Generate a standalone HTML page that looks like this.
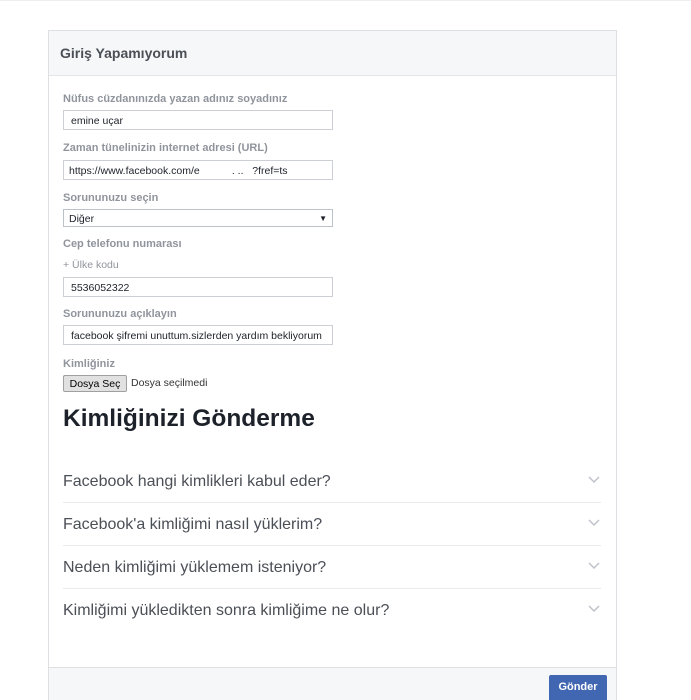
<!DOCTYPE html>
<html style="margin:0;height:700px;overflow:hidden"><head><meta charset="utf-8"><style>
body{margin:0;width:691px;height:700px;background:#fff;font-family:"Liberation Sans",Arial,sans-serif;position:relative;overflow:hidden}
.a{position:absolute}
.panel{left:48px;top:30px;width:567px;height:669px;border:1px solid #dddfe2;border-bottom:none;background:#fff}
.hdr{left:49px;top:31px;width:567px;height:44px;background:#f6f7f9;border-bottom:1px solid #e5e5e5}
.hdr span{position:absolute;left:11px;top:14px;font-size:14px;font-weight:bold;color:#4b4f56}
.lbl{left:63px;font-size:11px;font-weight:bold;color:#90949c}
.inp{left:63px;width:268px;height:18px;border:1px solid #ccd0d5;font-size:10.5px;color:#1d2129;line-height:20px;box-sizing:content-box}
.inp span{padding-left:7px}
.q{left:63px;font-size:16px;color:#4b4f56}
.sep{left:63px;width:538px;height:1px;background:#e9ebee}
</style></head><body>
<div class="a" style="left:0;top:0;width:691px;height:1px;background:#eee"></div>
<div class="a panel"></div>
<div class="a hdr"><span>Giriş Yapamıyorum</span></div>
<div class="a lbl" style="top:93px">Nüfus cüzdanınızda yazan adınız soyadınız</div>
<div class="a inp" style="top:110px"><span>emine uçar</span></div>
<div class="a lbl" style="top:142px">Zaman tünelinizin internet adresi (URL)</div>
<div class="a inp" style="top:160px"><span style="padding-left:5px">https://www.facebook.com/e&nbsp;&nbsp;&nbsp;&nbsp;&nbsp;&nbsp;&nbsp;&nbsp;&nbsp;&nbsp;&nbsp;. ..&nbsp;&nbsp;&nbsp;?fref=ts</span></div>
<div class="a lbl" style="top:192px">Sorununuzu seçin</div>
<div class="a inp" style="top:209px;height:16px;line-height:18px;border-color:#bdc1c9"><span style="padding-left:5px">Diğer</span><span class="a" style="right:5px;top:0;font-size:8px">▼</span></div>
<div class="a lbl" style="top:238px">Cep telefonu numarası</div>
<div class="a" style="left:63px;top:259px;font-size:10.5px;color:#90949c">+ Ülke kodu</div>
<div class="a inp" style="top:277px"><span>5536052322</span></div>
<div class="a lbl" style="top:308px">Sorununuzu açıklayın</div>
<div class="a inp" style="top:325px"><span>facebook şifremi unuttum.sizlerden yardım bekliyorum</span></div>
<div class="a lbl" style="top:358px">Kimliğiniz</div>
<div class="a" style="left:63px;top:375px;width:62px;height:15px;border:1px solid #a0a0a0;background:#e1e1e1;font-size:10.5px;line-height:16px;text-align:center;color:#000;border-radius:2px">Dosya Seç</div>
<div class="a" style="left:131px;top:377px;font-size:10.5px;color:#333">Dosya seçilmedi</div>
<div class="a" style="left:63px;top:405px;font-size:24.5px;font-weight:bold;color:#1d2129">Kimliğinizi Gönderme</div>
<div class="a q" style="top:473px">Facebook hangi kimlikleri kabul eder?</div>
<div class="a sep" style="top:502px"></div>
<div class="a q" style="top:516px">Facebook'a kimliğimi nasıl yüklerim?</div>
<div class="a sep" style="top:545px"></div>
<div class="a q" style="top:559px">Neden kimliğimi yüklemem isteniyor?</div>
<div class="a sep" style="top:588px"></div>
<div class="a q" style="top:602px">Kimliğimi yükledikten sonra kimliğime ne olur?</div>
<svg class="a" style="left:587px;top:476px" width="14" height="150"><g fill="none" stroke="#bec2c9" stroke-width="1.5"><path d="M2 1l5 5 5-5"/><path d="M2 44l5 5 5-5"/><path d="M2 87l5 5 5-5"/><path d="M2 130l5 5 5-5"/></g></svg>
<div class="a" style="left:49px;top:667px;width:567px;height:33px;background:#f6f7f9;border-top:1px solid #dddfe2"></div>
<div class="a" style="left:549px;top:675px;width:58px;height:25px;background:#4267b2;border-radius:2px 2px 0 0;color:#fff;font-size:11px;font-weight:bold;text-align:center;line-height:25px">Gönder</div>
</body></html>
